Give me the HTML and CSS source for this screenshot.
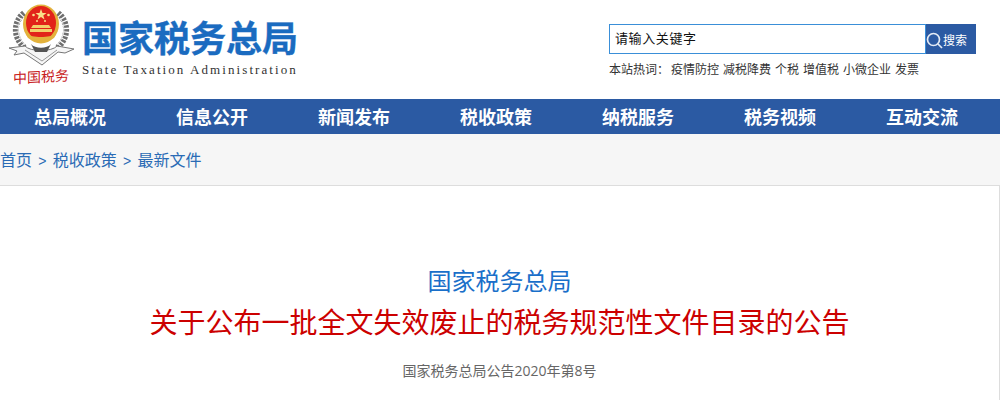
FILE: index.html
```html
<!DOCTYPE html>
<html lang="zh-CN">
<head>
    <meta charset="UTF-8">
    <title>国家税务总局</title>
    <link rel="stylesheet" href="styles.css">
</head>
<body>
    <div class="header">
        <div class="logo">
            <svg class="emblem" width="82" height="67" viewBox="0 0 82 67">
                <!-- wheat wreath -->
                <path d="M24 13 C13 22 13 38 25 48" fill="none" stroke="#6f6f6f" stroke-width="6" stroke-dasharray="2.500 1.200"/>
                <path d="M58 13 C69 22 69 38 57 48" fill="none" stroke="#6f6f6f" stroke-width="6" stroke-dasharray="2.500 1.200"/>
                <path d="M22 18 C16 26 17 37 25 45" fill="none" stroke="#e4e4e4" stroke-width="1"/>
                <path d="M60 18 C66 26 65 37 57 45" fill="none" stroke="#e4e4e4" stroke-width="1"/>
                <!-- ribbon -->
                <path d="M9 48 L25 46 C30 52 52 52 57 46 L74 49 L65 53 L58 52 L42 65 L24 53 L14 55 L17 51 Z" fill="#f6f6f6" stroke="#777" stroke-width="1"/>
                <path d="M25 50 L42 61 L57 50" fill="none" stroke="#999" stroke-width="1"/>
                <path d="M31 44 C35 49 47 49 51 44 L47 52 H35 Z" fill="#555"/>
                <!-- badge -->
                <ellipse cx="41" cy="24" rx="18" ry="19.500" fill="#e3b23c"/>
                <ellipse cx="41" cy="23" rx="15" ry="17" fill="#e2231a"/>
                <polygon points="41,9 42.500,13 46.500,13 43.300,15.500 44.500,19.500 41,17 37.500,19.500 38.700,15.500 35.500,13 39.500,13" fill="#f9e08a"/>
                <circle cx="33.500" cy="15" r="1.300" fill="#f9e08a"/>
                <circle cx="48.500" cy="15" r="1.300" fill="#f9e08a"/>
                <circle cx="37" cy="21" r="1" fill="#f9e08a"/>
                <circle cx="45" cy="21" r="1" fill="#f9e08a"/>
                <path d="M33 25 H49 L51 28 H31 Z" fill="#f3cf6a"/>
                <path d="M30 29 H52 V32 H30 Z" fill="#f3cf6a"/>
                <path d="M26 34 C32 38 50 38 56 34 L54 38 C48 41 34 41 28 38 Z" fill="#e3b23c"/>
            </svg>
            <div class="seal-text">中国税务</div>
        </div>
        <div class="site-name">
            <div class="name-cn">国家税务总局</div>
            <div class="name-en">State Taxation Administration</div>
        </div>
        <div class="search-area">
            <div class="search-box">
                <input class="search-input" type="text" placeholder="请输入关键字">
                <button class="search-btn">
                    <svg width="17" height="17" viewBox="0 0 17 17"><circle cx="7.500" cy="7.500" r="6" fill="none" stroke="#e4ebf5" stroke-width="1.700"/><path d="M12 12 L16 16" stroke="#e4ebf5" stroke-width="1.700"/></svg>
                    <span>搜索</span>
                </button>
            </div>
            <div class="hot-words">
                <span class="hot-label">本站热词：</span>
                <a>疫情防控</a><a>减税降费</a><a>个税</a><a>增值税</a><a>小微企业</a><a>发票</a>
            </div>
        </div>
    </div>

    <div class="nav">
        <a>总局概况</a>
        <a>信息公开</a>
        <a>新闻发布</a>
        <a>税收政策</a>
        <a>纳税服务</a>
        <a>税务视频</a>
        <a>互动交流</a>
    </div>

    <div class="breadcrumb">
        <a>首页</a><span class="sep">&gt;</span><a>税收政策</a><span class="sep">&gt;</span><a>最新文件</a>
    </div>

    <div class="article">
        <div class="issuer">国家税务总局</div>
        <h1>关于公布一批全文失效废止的税务规范性文件目录的公告</h1>
        <div class="doc-no">国家税务总局公告2020年第8号</div>
    </div>
</body>
</html>
```

FILE: styles.css
```css
html, body {
    margin: 0;
    padding: 0;
}
body {
    width: 1000px;
    height: 400px;
    overflow: hidden;
    background-color: white;
    font-family: "Liberation Sans", "Noto Sans CJK SC", sans-serif;
}
.header {
    display: flex;
    height: 99px;
    box-sizing: border-box;
}
.logo {
    width: 82px;
    flex-shrink: 0;
}
.emblem {
    display: block;
}
.seal-text {
    width: 56px;
    margin-left: 13px;
    color: #c8201c;
    font-size: 14px;
    line-height: 20px;
    white-space: nowrap;
    transform: skewY(-3deg);
}
.site-name {
    width: 527px;
    padding-top: 18px;
    box-sizing: border-box;
    flex-shrink: 0;
}
.name-cn {
    color: #1a6bc0;
    font-size: 36px;
    font-weight: bold;
    line-height: 44px;
    -webkit-text-stroke: 0.4px #1a6bc0;
}
.name-en {
    color: #333;
    font-family: "Liberation Serif", serif;
    font-size: 13px;
    letter-spacing: 2.080px;
    line-height: 16px;
}
.search-area {
    padding-top: 24px;
}
.search-box {
    display: flex;
    width: 367px;
    height: 30px;
}
.search-input {
    width: 317px;
    height: 30px;
    box-sizing: border-box;
    border: 1px solid #3a8fd8;
    padding: 0 5px 2px;
    font-family: inherit;
    font-size: 13px;
    letter-spacing: 0.600px;
    outline: none;
}
.search-input::placeholder {
    color: #111;
    opacity: 1;
}
.search-btn {
    display: flex;
    align-items: center;
    width: 50px;
    height: 30px;
    padding: 0;
    border: none;
    background-color: #2b5aa3;
    color: white;
    font-family: inherit;
    font-size: 12px;
}
.search-btn svg {
    margin-top: 2px;
}
.hot-words {
    display: flex;
    gap: 4px;
    margin-top: 8px;
    font-size: 12px;
    line-height: 16px;
    color: #333;
    white-space: nowrap;
}
.hot-label {
    margin-right: -2px;
}
.nav {
    display: flex;
    height: 35px;
    margin-left: -1px;
    background-color: #2b5aa3;
}
.nav a {
    width: 142px;
    text-align: center;
    color: white;
    font-size: 18px;
    font-weight: bold;
    line-height: 39px;
}
.breadcrumb {
    height: 52px;
    box-sizing: border-box;
    background-color: #f6f6f6;
    border-bottom: 1px solid #ddd;
    color: #2a6bb5;
    font-size: 16px;
    line-height: 53px;
}
.sep {
    margin: 0 6.300px;
    font-size: 14px;
}
.article {
    height: 215px;
    box-sizing: border-box;
    border-right: 1px solid #ddd;
    padding-top: 81px;
    text-align: center;
}
.issuer {
    color: #1a6fc9;
    font-size: 24px;
    line-height: 30px;
}
h1 {
    margin: 10px 0 0;
    color: #c00;
    font-size: 28px;
    font-weight: normal;
    line-height: 34px;
}
.doc-no {
    margin-top: 20px;
    color: #666;
    font-family: "Open Sans", "Noto Sans CJK SC", sans-serif;
    font-size: 14px;
    line-height: 20px;
}
```
